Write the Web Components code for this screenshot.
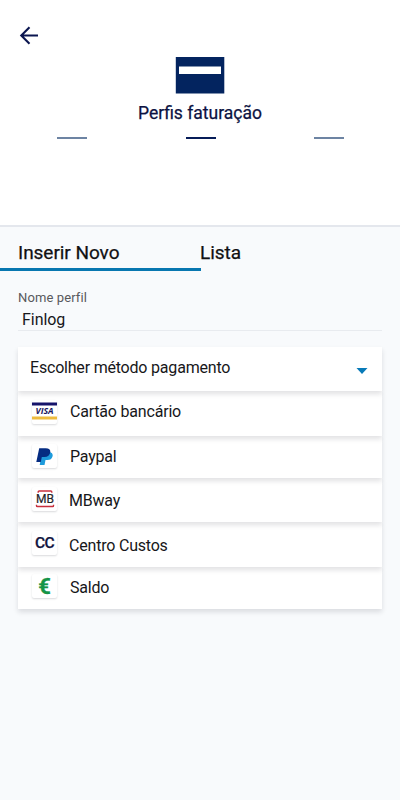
<!DOCTYPE html>
<html lang="pt">
<head>
<meta charset="utf-8">
<title>Perfis faturação</title>
<style>
html,body{margin:0;height:100%}
body{font-family:Roboto,"Liberation Sans",sans-serif;background:#f8fafc;color:#17171a;overflow:hidden}
</style>
</head>
<body>
<billing-page></billing-page>
<script>
const define=(name,html)=>customElements.define(name,class extends HTMLElement{
  constructor(){super();const t=document.createElement('template');t.innerHTML=html;
    this.attachShadow({mode:'open'}).append(t.content.cloneNode(true));}
});

define('page-header',`
<style>
:host{display:flex;flex-direction:column;height:225px;background:#fff;border-bottom:2px solid #e4e7ed;color:#0c1242}
.back{height:57px;padding:26px 0 0 19px;box-sizing:border-box}
svg{display:block}
.card{align-self:center}
h1{margin:8px 0 0;height:22px;font-size:17.500px;line-height:22px;font-weight:400;-webkit-text-stroke:.25px;text-align:center}
.steps{display:flex;justify-content:space-between;padding:0 56px 0 57px;margin-top:13px}
.steps i{width:30px;height:2px;background:#6d84a3}
.steps i.on{background:#061c58}
</style>
<div class="back"><svg width="20" height="20" viewBox="0 0 20 20" fill="none" stroke="#0b1650" stroke-width="2.1"><path d="M19 9.5H2.5M10.5 1.3L2.3 9.5l8.200 8.200"/></svg></div>
<svg class="card" width="50" height="37" viewBox="0 0 50 37"><path fill="#03245f" d="M.8 0h48.500v36.500H.8z"/><path fill="#fff" d="M4 9.500h42v7.500H4z"/></svg>
<h1><slot></slot></h1>
<div class="steps"><i></i><i class="on"></i><i></i></div>`);

define('tab-item',`
<style>
:host{display:block;flex:1;box-sizing:border-box;height:44px;padding-top:14px;font-size:19px;line-height:24px;font-weight:400;letter-spacing:-.04px;-webkit-text-stroke:.25px;color:#101013}
:host([active]){border-bottom:3px solid #0877b0;padding-left:18px;flex:0 0 201px}
:host(:not([active])){margin-left:-1px}
</style><slot></slot>`);

define('tab-bar',`<style>:host{display:flex;height:44px}</style><slot></slot>`);

define('text-field',`
<style>
:host{display:block;margin:0 18px;padding-top:18px;height:41px;border-bottom:1px solid #e8ebef}
.l{font-size:13px;line-height:18px;color:#58595c;letter-spacing:.12px}
.v{font-size:16px;line-height:20px;padding:3px 0 0 4px;letter-spacing:-.05px}
</style>
<div class="l"><slot name="label"></slot></div><div class="v"><slot></slot></div>`);

define('select-row',`
<style>
:host{display:flex;position:relative;box-sizing:border-box;height:var(--h,44px);align-items:flex-start;background:#fff;box-shadow:0 3px 5px rgba(20,25,35,.13);padding:var(--pt,10px) 14px 0 12px;font-size:16px;line-height:22px}
.t{flex:1;white-space:nowrap;letter-spacing:-.2px}
</style>
<slot name="icon"></slot><div class="t"><slot></slot></div><slot name="end"></slot>`);

define('method-tile',`
<style>
:host{display:flex;box-sizing:border-box;flex:none;width:25px;height:24px;margin:var(--m,-1px) var(--gap,13px) 0 2px;background:#fff;border-radius:2px;box-shadow:0 1px 2px rgba(20,25,35,.16);align-items:center;justify-content:center;line-height:1}
</style><slot></slot>`);

define('select-list',`<style>:host{display:flex;flex-direction:column;margin:16px 18px 0}</style><slot></slot>`);

define('billing-page',`
<style>
:host{display:block;width:400px;height:800px;background:#f8fafc}
svg{display:block}
.r1{position:relative;z-index:6}.r2{z-index:5}.r3{z-index:4}.r4{z-index:3}.r5{z-index:2}
.cc{font-weight:500;font-size:15.500px;letter-spacing:-.5px;-webkit-text-stroke:.25px;color:#11143e;padding-top:2px}
.eur{font-weight:700;font-size:22px;-webkit-text-stroke:.3px;color:#159447;padding-top:2px}
</style>
<page-header>Perfis faturação</page-header>
<tab-bar><tab-item active>Inserir Novo</tab-item><tab-item>Lista</tab-item></tab-bar>
<text-field><span slot="label">Nome perfil</span>Finlog</text-field>
<select-list>
<select-row class="r1" style="--h:44px;--pt:10px">Escolher método pagamento<svg slot="end" width="12" height="6" viewBox="0 0 12 6" style="margin-top:11px"><path fill="#087ab8" d="M.5 0h11L6 6z"/></svg></select-row>
<select-row class="r2" style="--h:45px;--pt:10px"><method-tile slot="icon"><svg width="25" height="24" viewBox="0 0 25 24"><path fill="#15136a" d="M0 2.500h25v3H0z"/><path fill="#edbb3e" d="M0 16.500h25v3H0z"/><text x="12.600" y="14.200" text-anchor="middle" textLength="18" lengthAdjust="spacingAndGlyphs" font-family="Open Sans,sans-serif" font-size="9" font-weight="700" font-style="italic" fill="#19175f">VISA</text></svg></method-tile>Cartão bancário</select-row>
<select-row class="r3" style="--h:42px;--pt:10px"><method-tile slot="icon" style="--m:-2px"><svg width="17" height="17" viewBox="0 0 17 17"><path fill="#1e9bdc" d="M6 4h8q3.500 1 2.500 4.500-1 3.500-5 3.500H9.500l-1 5H3.700z"/><path fill="#052c82" d="M3.200.2h6.500q5 0 4.600 3.800-.7 5-6 5H5.800l-1 5H.3z"/></svg></method-tile>Paypal</select-row>
<select-row class="r4" style="--h:44px;--pt:12px"><method-tile slot="icon" style="--gap:12px;--m:-3px"><svg width="20" height="20" viewBox="0 0 20 20"><g fill="none" stroke="#c82f3d" stroke-width="1.400"><path d="M3.200 3.800V3Q3.200 2 4.200 2h11.600q1 0 1 1v.8M1.500 15.800v.9q0 .8.800.8h15.400q.8 0 .8-.8v-.9"/></g><text x="10" y="14" text-anchor="middle" textLength="18" lengthAdjust="spacingAndGlyphs" font-family="Roboto,sans-serif" font-size="12.500" font-weight="400" fill="#252529" stroke="#252529" stroke-width=".2">MB</text></svg></method-tile>MBway</select-row>
<select-row class="r5" style="--h:45px;--pt:13px"><method-tile slot="icon" style="--gap:12px;--m:-4px"><span class="cc">CC</span></method-tile>Centro Custos</select-row>
<select-row style="--h:42px;--pt:10px"><method-tile slot="icon" style="--m:-3px"><span class="eur">€</span></method-tile>Saldo</select-row>
</select-list>`);
</script>
</body>
</html>
